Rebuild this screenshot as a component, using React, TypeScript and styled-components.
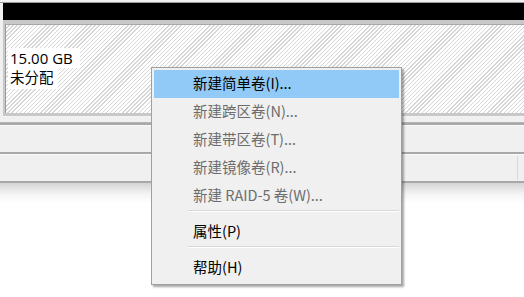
import React from "react";
import styled, { createGlobalStyle } from "styled-components";

const GlobalStyle = createGlobalStyle`
  html, body {
    margin: 0;
    padding: 0;
    background: #ffffff;
  }
  body {
    font-family: "Noto Sans", "Noto Sans CJK SC", sans-serif;
  }
`;

type MenuEntry =
  | { kind: "item"; label: string; disabled?: boolean; active?: boolean }
  | { kind: "sep" };

const menuEntries: MenuEntry[] = [
  { kind: "item", label: "新建简单卷(I)...", active: true },
  { kind: "item", label: "新建跨区卷(N)...", disabled: true },
  { kind: "item", label: "新建带区卷(T)...", disabled: true },
  { kind: "item", label: "新建镜像卷(R)...", disabled: true },
  { kind: "item", label: "新建 RAID-5 卷(W)...", disabled: true },
  { kind: "sep" },
  { kind: "item", label: "属性(P)" },
  { kind: "sep" },
  { kind: "item", label: "帮助(H)" },
];

function App() {
  return (
    <>
      <GlobalStyle />
      <Screen>
        <DiskPanel>
          <TopEdge />
          <DiskHeader />
          <VolumeFrame>
            <Hatch>
              <SizeLabel>15.00 GB</SizeLabel>
              <StateLabel>未分配</StateLabel>
            </Hatch>
          </VolumeFrame>
        </DiskPanel>
        <Strip />
        <Strip>
          <StripDivider />
        </Strip>
        <FadeOut />

        <ContextMenu>
          {menuEntries.map((entry, i) =>
            entry.kind === "sep" ? (
              <Separator key={i} />
            ) : (
              <MenuItem key={i} $active={entry.active} $disabled={entry.disabled}>
                {entry.label}
              </MenuItem>
            )
          )}
        </ContextMenu>
      </Screen>
    </>
  );
}

const Screen = styled.div`
  position: relative;
  width: 524px;
  height: 297px;
  overflow: hidden;
  background: #ffffff;
`;

const DiskPanel = styled.div`
  display: flex;
  flex-direction: column;
  background: #f0f0f0;
  padding-left: 3px;
  border-bottom: 1px solid #b4b4b4;
`;

const TopEdge = styled.div`
  height: 2px;
  background: #f0f0f0;
  border-bottom: 1px solid #9c9c9c;
  margin-left: -3px;
`;

const DiskHeader = styled.div`
  height: 17px;
  background: #000000;
`;

const VolumeFrame = styled.div`
  background: #c8c8c8;
  padding: 4px 0 3px 2px;
  border-bottom: 1px solid #f4f4f4;
  margin-bottom: 5px;
`;

const Hatch = styled.div`
  height: 89px;
  padding: 23px 0 0 2px;
  box-sizing: border-box;
  border-left: 1px solid #9a9a9a;
  border-top: 1px solid #a8a8a8;
  background-color: #ffffff;
  background-image: repeating-linear-gradient(
    135deg,
    #ffffff 0px,
    #ffffff 1.9px,
    #d6d6d6 1.9px,
    #d6d6d6 2.9px
  );
  display: flex;
  flex-direction: column;
  align-items: flex-start;
`;

const SizeLabel = styled.span`
  background: #ffffff;
  color: #000000;
  font-family: "Open Sans", "Noto Sans", sans-serif;
  font-size: 15px;
  line-height: 20px;
  padding: 0 7px 0 2px;
`;

const StateLabel = styled.span`
  background: #ffffff;
  color: #000000;
  font-family: "Noto Sans CJK SC", sans-serif;
  font-size: 14.5px;
  line-height: 18px;
  padding: 0 4px 3px 2px;
`;

const Strip = styled.div`
  position: relative;
  height: 27px;
  background: #f0f0f0;
  border-top: 2px solid #a8a8a8;
  box-shadow: inset 0 1px 0 #fafafa;
`;

const StripDivider = styled.div`
  margin-left: auto;
  margin-right: 6px;
  width: 1px;
  height: 24px;
  margin-top: 2px;
  background: #d8d8d8;
`;

const FadeOut = styled.div`
  height: 20px;
  border-top: 2px solid #a8a8a8;
  background: linear-gradient(180deg, #d4d4d4 0%, #f4f4f4 55%, #ffffff 100%);
`;

const ContextMenu = styled.div`
  position: absolute;
  left: 151px;
  top: 67px;
  width: 251px;
  box-sizing: border-box;
  padding: 2px;
  background: #f0f0f0;
  border: 1px solid #a0a0a0;
  box-shadow: 2px 2px 2px rgba(0, 0, 0, 0.35);
  font-family: "Noto Sans CJK SC", sans-serif;
  font-size: 14.5px;
  display: flex;
  flex-direction: column;
`;

const MenuItem = styled.div<{ $active?: boolean; $disabled?: boolean }>`
  height: 28px;
  box-sizing: border-box;
  display: flex;
  align-items: center;
  padding: 0 0 3px 39px;
  color: ${(p) => (p.$disabled ? "#6d6d6d" : "#000000")};
  background: ${(p) => (p.$active ? "#91c9f7" : "transparent")};
  white-space: nowrap;
`;

const Separator = styled.div`
  height: 8px;
  margin-left: 34px;
  display: flex;
  align-items: flex-start;
  &::before {
    content: "";
    display: block;
    width: 100%;
    height: 1px;
    background: #d7d7d7;
    box-shadow: 0 1px 0 #ffffff;
  }
`;

export default App;
